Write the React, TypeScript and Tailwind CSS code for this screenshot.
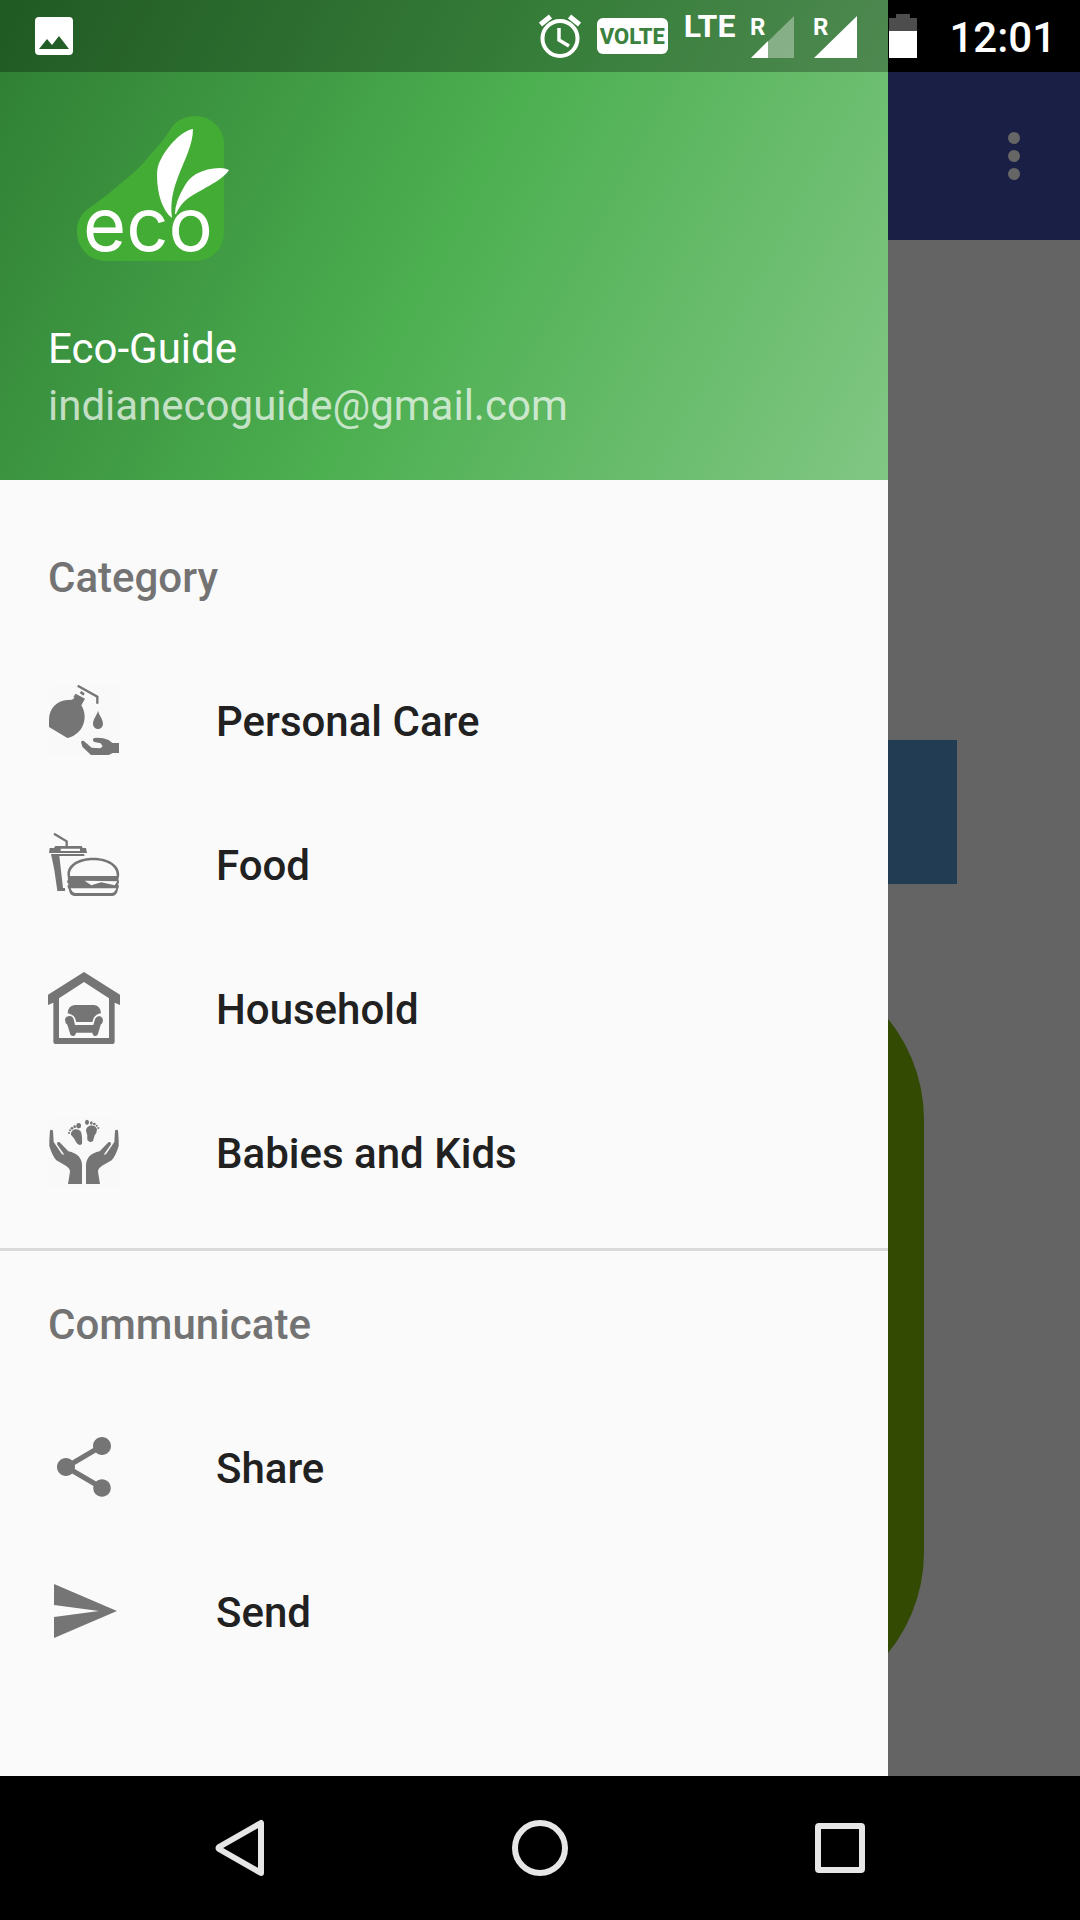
import type { ReactNode } from "react";
import { MdSend, MdShare } from "react-icons/md";

function Hatch({ id, x, y }: { id: string; x: number; y: number }) {
  return (
    <>
      <defs>
        <pattern id={id} width="12" height="12" patternUnits="userSpaceOnUse">
          <path d="M-3 3 3 -3M0 12 12 0M9 15 15 9" stroke="#f4f4f4" strokeWidth="2" />
        </pattern>
      </defs>
      <rect x={x} y={y} width="210" height="210" fill={`url(#${id})`} />
    </>
  );
}

function PersonalCareIcon() {
  return (
    <svg viewBox="54 42 216 216" className="size-18" fill="currentColor" aria-hidden="true">
      <Hatch id="hatch-care" x={57} y={45} />
      <path d="M57 150C57 112 84 92 112 90L126 89L134 83L130 81L137 71L165 86L154 106C166 126 168 150 156 172C148 187 128 203 112 204L57 171Z" />
      <path d="M149 69L154 63L164 70L160 77Z" />
      <path d="M143 47L202 80V101" fill="none" stroke="currentColor" strokeWidth="7" />
      <path d="M204 122C207 136 219 147 219 161A15 16 0 0 1 189 161C189 147 201 136 204 122Z" />
      <path d="M153 216Q158 209 165 216L185 233L211 235L218 229L212 220L193 216Q185 210 192 204Q216 202 236 210L247 219H267V249H248L236 255H183L157 230Z" />
    </svg>
  );
}

function FoodIcon() {
  return (
    <svg viewBox="54 54 216 216" className="size-18" fill="currentColor" aria-hidden="true">
      <path d="M72 71L110 94V110" fill="none" stroke="currentColor" strokeWidth="7" />
      <path fillRule="evenodd" d="M76 108H155L158 114H168L171 129H57L59 114H72ZM92 116H150V123H92Z" />
      <path d="M63 132H163V138H88L99 234H105V243H82L73 180Z" />
      <path
        fillRule="evenodd"
        d="M113 199C107 162 148 143 190 143C232 143 273 164 267 199L265 209Q270 216 264 222Q269 230 264 237Q262 255 248 258H132Q119 256 117 240L112 229Q116 226 115 221Q108 216 114 209ZM120 198H260C262 170 232 151 190 151C150 151 117 169 120 198ZM164 212L184 226L214 217L254 226L262 214ZM122 235Q126 249 137 249H246Q255 247 259 235Z"
      />
    </svg>
  );
}

function HouseholdIcon() {
  return (
    <svg viewBox="54 36 216 216" className="size-18" fill="currentColor" aria-hidden="true">
      <path
        fillRule="evenodd"
        d="M162 36L270 104V135L254 128V247Q253 252 248 252H76Q71 252 70 247V128L54 135V104ZM162 66L87 115V234H237V115Z"
      />
      <path d="M113 160Q114 136 135 135H193Q211 137 213 160Q198 162 191 174L187 186H139L135 174Q129 163 113 160Z" />
      <path d="M105 180C105 166 127 163 131 178L135 195H190L195 178C200 163 219 167 219 181Q219 189 212 194L204 222Q202 228 196 228Q189 228 187 218H138Q136 228 129 228Q121 228 120 220L112 194Q105 189 105 180Z" />
    </svg>
  );
}

function BabiesIcon() {
  return (
    <svg viewBox="54 33 216 216" className="size-18" fill="currentColor" aria-hidden="true">
      <Hatch id="hatch-kids" x={57} y={36} />
      <path d="M60 76Q65 72 69 77L71 111L96 148L103 149L81 118Q80 109 88 111L115 139Q155 147 156 181V237H114L120 200Q120 189 105 181L79 166Q66 151 58 123V106Z" />
      <path d="M264 76Q259 72 255 77L253 111L228 148L221 149L243 118Q244 109 236 111L209 139Q169 147 168 181V237H210L204 200Q204 189 219 181L245 166Q258 151 266 123V106Z" />
      <path d="M123 89C121 70 150 67 154 84Q157 95 156 117Q146 125 138 111Q135 102 123 89Z" />
      <path d="M168 77C169 57 198 57 201 73Q201 84 194 91L189 108Q180 115 172 105Q174 91 168 77Z" />
      <ellipse cx="146" cy="62" rx="7" ry="8" />
      <circle cx="134" cy="65" r="4" />
      <circle cx="126" cy="70" r="4" />
      <circle cx="120" cy="76" r="3" />
      <circle cx="117" cy="84" r="3" />
      <ellipse cx="171" cy="52" rx="6" ry="8" />
      <ellipse cx="184" cy="54" rx="4" ry="5" />
      <circle cx="193" cy="57" r="4" />
      <circle cx="200" cy="62" r="3" />
      <circle cx="205" cy="69" r="3" />
    </svg>
  );
}

function EcoLogo() {
  return (
    <svg viewBox="77 116 153 146" className="h-[146px] w-[153px] overflow-visible" role="img" aria-label="eco">
      <path
        d="M172 127C177 120 186 116 195 116A29 27 0 0 1 224 143V233A28 28 0 0 1 196 261H105A28 29 0 0 1 77 230C77 222 81 214 88 209Q108 195 126 179Q139 169 150 155Q162 143 172 127Z"
        fill="#43ac34"
      />
      <path d="M193 129C181 131 168 146 161 159Q157 166 157 175C157 195 163 211 172 218C170 203 173 190 178 177C184 161 193 145 193 129Z" fill="#fff" />
      <path d="M229 170Q225 168 220 168Q207 168 196 174Q188 179 184 187Q175 202 175 214H176Q180 205 186 200C197 191 223 181 229 170Z" fill="#fff" />
      <text x="83" y="251" fill="#fff" fontFamily="Inter, sans-serif" fontSize="74">
        eco
      </text>
    </svg>
  );
}

function AlarmIcon() {
  return (
    <svg viewBox="0 0 42 44" className="h-11 w-[42px]" fill="none" stroke="#fff" aria-hidden="true">
      <circle cx="21" cy="24.500" r="17.500" strokeWidth="4" />
      <path d="M20 14V26L30 32" strokeWidth="3.500" />
      <path d="M1.500 10.500 11.500 2.500M40.500 10.500 30.500 2.500" strokeWidth="5" />
    </svg>
  );
}

function SignalIcon({ weak = false }: { weak?: boolean }) {
  return (
    <svg viewBox="0 0 43 44" className="h-11 w-[43px] overflow-visible" fill="#fff" aria-hidden="true">
      <path d="M43 2V44H0Z" opacity={weak ? 0.35 : 1} />
      {weak && <path d="M17 27V44H0Z" />}
      <text x="-1" y="21" fontFamily="Roboto, sans-serif" fontWeight="700" fontSize="24">
        R
      </text>
    </svg>
  );
}

function StatusBar() {
  return (
    <div className="absolute inset-x-0 top-0 flex h-18 items-center justify-between bg-black/28 pr-6 pl-[35px] text-white">
      <svg viewBox="0 0 38 38" className="size-[38px]" aria-hidden="true">
        <path fillRule="evenodd" fill="#fff" d="M4 0H34Q38 0 38 4V34Q38 38 34 38H4Q0 38 0 34V4Q0 0 4 0ZM4 32H34L24 19L17 28L12 22Z" />
      </svg>
      <div className="flex items-center gap-8">
        <div className="flex items-center gap-5">
          <div className="flex items-center gap-4">
            <AlarmIcon />
            <span className="flex h-9 w-[71px] items-center justify-center rounded-md bg-white text-[22px] font-extrabold text-[#3c823f]">
              VOLTE
            </span>
            <span className="h-11 text-[32px] leading-6 font-bold">LTE</span>
            <SignalIcon weak />
          </div>
          <SignalIcon />
        </div>
        <svg viewBox="0 0 28 44" className="h-11 w-7" aria-hidden="true">
          <path d="M7 0H21V4H28V17H0V4H7Z" fill="#4d4d4d" />
          <path d="M0 17H28V44H0Z" fill="#fff" />
        </svg>
        <time className="pt-1 text-[42px] leading-[48px] font-medium">12:01</time>
      </div>
    </div>
  );
}

function Item({ icon, label }: { icon: ReactNode; label: string }) {
  return (
    <li>
      <a href="#" className="flex h-36 items-center gap-24 px-12 text-[#212121]">
        <span className="text-[#757575]">{icon}</span>
        <span className="pt-1">{label}</span>
      </a>
    </li>
  );
}

function Heading({ children }: { children: ReactNode }) {
  return <h2 className="flex h-36 items-center px-12 pt-1 text-[#737373]">{children}</h2>;
}

function Drawer() {
  return (
    <aside className="absolute inset-y-0 right-48 left-0 bg-[#fafafa]">
      <header className="flex h-[480px] flex-col justify-between bg-[linear-gradient(118deg,#2e7d32,#4caf50,#81c784)] pt-[116px] pb-[46px] pl-12 text-[42px] leading-[57px] text-white">
        <div className="pl-[29px]">
          <EcoLogo />
        </div>
        <div>
          <p>Eco-Guide</p>
          <p className="text-white/70">indianecoguide@gmail.com</p>
        </div>
      </header>
      <nav className="pt-6 text-[42px] leading-[48px] font-medium">
        <Heading>Category</Heading>
        <ul className="border-b-3 border-[#dadada] pb-6">
          <Item icon={<PersonalCareIcon />} label="Personal Care" />
          <Item icon={<FoodIcon />} label="Food" />
          <Item icon={<HouseholdIcon />} label="Household" />
          <Item icon={<BabiesIcon />} label="Babies and Kids" />
        </ul>
        <Heading>Communicate</Heading>
        <ul>
          <Item icon={<MdShare className="size-18" />} label="Share" />
          <Item icon={<MdSend className="size-18" />} label="Send" />
        </ul>
      </nav>
    </aside>
  );
}

function NavButton({ label, children }: { label: string; children: ReactNode }) {
  return (
    <button type="button" aria-label={label} className="flex flex-1 items-center justify-center">
      <svg viewBox="0 0 60 60" className="size-15" fill="none" stroke="#e6e6e6" strokeWidth="6" strokeLinejoin="round" aria-hidden="true">
        {children}
      </svg>
    </button>
  );
}

export default function App() {
  return (
    <div className="flex min-h-screen flex-col bg-black font-[Roboto,sans-serif]">
      <div className="relative flex flex-1 flex-col overflow-hidden pt-18">
        <div className="flex h-42 items-center justify-end bg-[#191f45] pr-9">
          <button type="button" aria-label="More options" className="flex w-15 flex-col items-center gap-1.5">
            <span className="size-3 rounded-full bg-[#666]" />
            <span className="size-3 rounded-full bg-[#666]" />
            <span className="size-3 rounded-full bg-[#666]" />
          </button>
        </div>
        <main className="flex flex-1 flex-col items-center bg-[#646464] px-[123px] pt-[500px]">
          <div className="h-36 w-full bg-[#223d53]" />
          <div className="mt-[76px] w-full px-[33px]">
            <div className="h-[752px] rounded-[160px] bg-[#334a03]" />
          </div>
        </main>
        <Drawer />
        <StatusBar />
      </div>
      <footer className="flex h-36 bg-black px-[90px]">
        <NavButton label="Back">
          <path d="M51 5V55L9 31Q8 30 9 29Z" />
        </NavButton>
        <NavButton label="Home">
          <circle cx="30" cy="30" r="25" />
        </NavButton>
        <NavButton label="Recent apps">
          <rect x="8" y="8" width="44" height="44" rx="1" />
        </NavButton>
      </footer>
    </div>
  );
}
